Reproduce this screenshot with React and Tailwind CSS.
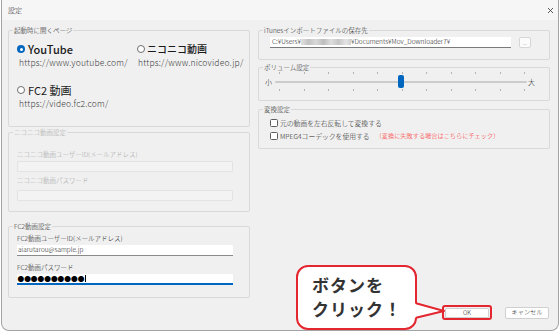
import React from "react";

function Group({ label, disabled, className, children }) {
    return (
        <div className={`border border-[#d9d9d9] rounded-[2px] ${className}`}>
            <div className={`-mt-[5px] ml-[4px] px-[1px] w-fit bg-[#f0f0f0] text-[6.5px] leading-[8px] ${disabled ? "text-[#a6a6a6]" : "text-[#222]"}`}>
                {label}
            </div>
            {children}
        </div>
    );
}

function Radio({ checked }) {
    return checked ? (
        <span className="w-[8px] h-[8px] rounded-full bg-[#0067c0] flex items-center justify-center shrink-0">
            <span className="w-[3px] h-[3px] rounded-full bg-white" />
        </span>
    ) : (
        <span className="w-[8px] h-[8px] rounded-full border border-[#6e6e6e] bg-white shrink-0" />
    );
}

function Checkbox() {
    return <span className="w-[8px] h-[8px] rounded-[1.5px] border border-[#5c5c5c] bg-white shrink-0" />;
}

export default function App() {
    const ticks = Array.from({ length: 11 });

    return (
        <div className="w-[560px] h-[332px] bg-white font-['Noto_Sans_CJK_JP',sans-serif] font-light text-[#1a1a1a]">
            <div className="relative ml-[1px] w-[558px] h-[331px] border-x border-b border-[#a3a3a3] rounded-b-[8px] bg-[#f0f0f0] flex flex-col overflow-hidden">
                {/* title bar */}
                <div className="h-[20px] shrink-0 bg-[#f6f6f6] flex items-center justify-between pl-[6px] pr-[4px]">
                    <span className="text-[7px] leading-[8px]">設定</span>
                    <svg width="7" height="7" viewBox="0 0 7 7">
                        <path d="M1 1L6 6M6 1L1 6" stroke="#333" strokeWidth="0.8" />
                    </svg>
                </div>

                <div className="flex-1 flex pl-[6px] pr-[8px] gap-[8px]">
                    {/* left column */}
                    <div className="w-[242px] flex flex-col pt-[10px]">
                        <Group label="起動時に開くページ" className="h-[97px]">
                            <div className="grid grid-cols-[120px_1fr] pl-[8px] mt-[8px]">
                                <div>
                                    <div className="flex items-center h-[14px]">
                                        <Radio checked />
                                        <span className="ml-[3px] text-[11px] leading-[14px] font-medium">YouTube</span>
                                    </div>
                                    <div className="ml-[2px] text-[8.5px] leading-[12px] tracking-[0.2px] text-[#3a3a3a]">https://www.youtube.com/</div>
                                </div>
                                <div>
                                    <div className="flex items-center h-[14px]">
                                        <Radio />
                                        <span className="ml-[2px] text-[10px] leading-[14px] font-medium">ニコニコ動画</span>
                                    </div>
                                    <div className="ml-[1px] text-[8.5px] leading-[12px] tracking-[0.2px] text-[#3a3a3a]">https://www.nicovideo.jp/</div>
                                </div>
                                <div className="mt-[15px]">
                                    <div className="flex items-center h-[14px]">
                                        <Radio />
                                        <span className="ml-[3px] text-[11px] leading-[14px] font-normal">FC2 動画</span>
                                    </div>
                                    <div className="ml-[2px] text-[8.5px] leading-[12px] tracking-[0.2px] text-[#3a3a3a]">https://video.fc2.com/</div>
                                </div>
                            </div>
                        </Group>

                        <Group label="ニコニコ動画設定" disabled className="h-[80px] mt-[5px]">
                            <div className="pl-[8px] pr-[8px] text-[#a6a6a6]">
                                <div className="mt-[14px] text-[6.5px] leading-[8px]">ニコニコ動画ユーザーID(メールアドレス)</div>
                                <div className="mt-[3px] w-[216px] h-[11px] border border-[#e3e3e3] bg-[#f3f3f3] rounded-[1px]" />
                                <div className="mt-[4px] text-[6.5px] leading-[8px]">ニコニコ動画パスワード</div>
                                <div className="mt-[6px] w-[216px] h-[11px] border border-[#e3e3e3] bg-[#f3f3f3] rounded-[1px]" />
                            </div>
                        </Group>

                        <Group label="FC2動画設定" className="h-[72px] mt-[14px]">
                            <div className="pl-[8px] pr-[8px]">
                                <div className="mt-[4px] text-[6.5px] leading-[8px]">FC2動画ユーザーID(メールアドレス)</div>
                                <div className="mt-[3px] w-[216px] h-[11px] bg-white border-b border-[#8a8a8a] rounded-t-[1px] flex items-center pl-[1px] text-[6.5px]">
                                    aiarutarou@sample.jp
                                </div>
                                <div className="mt-[7px] text-[6.5px] leading-[8px]">FC2動画パスワード</div>
                                <div className="mt-[3px] w-[216px] h-[11px] bg-white border-b-2 border-[#0067c0] rounded-t-[1px] flex items-center pl-[0.5px]">
                                    <span className="text-[6.7px] leading-[9px] text-black font-normal">●●●●●●●●●●</span>
                                    <span className="w-[0.6px] h-[7px] bg-black ml-[0.5px]" />
                                </div>
                            </div>
                        </Group>
                    </div>

                    {/* right column */}
                    <div className="w-[292px] flex flex-col pt-[10px] pb-[10px]">
                        <Group label="iTunesインポートファイルの保存先" className="h-[30px]">
                            <div className="flex items-center mt-[3px] pl-[11px]">
                                <div className="w-[241px] h-[11px] bg-white border-b border-[#7a7a7a] flex items-center pl-[2px] text-[6.5px] whitespace-nowrap overflow-hidden">
                                    <span>C:¥Users¥</span>
                                    <span className="inline-block w-[50px] h-[6px] bg-[linear-gradient(90deg,#e2e2e2,#c3c3c3_15%,#d9d9d9_30%,#bdbdbd_45%,#dedede_60%,#c6c6c6_75%,#e4e4e4_90%,#d0d0d0)]" />
                                    <span>¥Documents¥Mov_Downloader7¥</span>
                                </div>
                                <div className="ml-[8px] w-[12px] h-[11px] bg-[#fbfbfb] border border-[#d6d6d6] rounded-[2px] flex items-center justify-center text-[5px] leading-none text-[#555]">
                                    ...
                                </div>
                            </div>
                        </Group>

                        <Group label="ボリューム設定" className="h-[34px] mt-[7px]">
                            <div className="flex items-center mt-[1px] pl-[6px]">
                                <span className="text-[7px] leading-[8px] w-[10px]">小</span>
                                <div className="w-[252px] flex flex-col">
                                    <div className="flex justify-between pl-[4px] pr-[2px]">
                                        {ticks.map((_, i) => (
                                            <span key={i} className="w-[1px] h-[2px] bg-[#b4b4b4]" />
                                        ))}
                                    </div>
                                    <div className="relative mt-[7px] h-[2px] bg-[#cccccc] rounded-full">
                                        <span className="absolute left-[123px] -top-[6px] w-[6px] h-[13px] rounded-[2px] bg-[#0067c0]" />
                                    </div>
                                    <div className="flex justify-between pl-[4px] pr-[2px] mt-[6px]">
                                        {ticks.map((_, i) => (
                                            <span key={i} className="w-[1px] h-[2px] bg-[#b4b4b4]" />
                                        ))}
                                    </div>
                                </div>
                                <span className="ml-[1px] text-[7px] leading-[8px]">大</span>
                            </div>
                        </Group>

                        <Group label="変換設定" className="h-[40px] mt-[8px]">
                            <div className="pl-[11px] mt-[5px]">
                                <div className="flex items-center h-[10px] gap-[2px]">
                                    <Checkbox />
                                    <span className="text-[6.8px] leading-[10px]">元の動画を左右反転して変換する</span>
                                </div>
                                <div className="flex items-center h-[10px] gap-[2px] mt-[3px]">
                                    <Checkbox />
                                    <span className="text-[6.8px] leading-[10px]">MPEG4コーデックを使用する</span>
                                    <span className="ml-[4px] text-[6.2px] leading-[10px] text-[#ff2222]">（変換に失敗する場合はこちらにチェック）</span>
                                </div>
                            </div>
                        </Group>

                        <div className="mt-auto flex justify-end items-center pr-[1px]">
                            <div className="w-[50px] h-[15px] border-2 border-[#e3262f] rounded-[3px] flex items-center justify-center bg-[#f0f0f0]">
                                <div className="w-[44px] h-[10px] bg-white border border-[#d0d0d0] rounded-[1px] flex items-center justify-center text-[6px] leading-none">OK</div>
                            </div>
                            <div className="ml-[13px] w-[44px] h-[12px] bg-white border border-[#cfcfcf] rounded-[2px] flex items-center justify-center text-[6.2px] leading-none">
                                キャンセル
                            </div>
                        </div>
                    </div>
                </div>

                {/* callout */}
                <div className="absolute left-[294px] top-[265px] w-[121px] h-[65px] bg-white border-2 border-[#e3262f] rounded-[12px] pl-[14px] pt-[6px]">
                    <div className="text-[17px] leading-[24px] font-bold tracking-[1px] text-[#333]">ボタンを</div>
                    <div className="text-[17px] leading-[24px] font-bold tracking-[1px] text-[#333]">クリック！</div>
                </div>
                <svg className="absolute left-[411px] top-[300px]" width="32" height="22" viewBox="0 0 32 22">
                    <polygon points="0,3 31,11 0,18" fill="#fff" />
                    <polyline points="3,3.2 31,11 3,17.8" fill="none" stroke="#e3262f" strokeWidth="2" strokeLinejoin="round" />
                </svg>
            </div>
        </div>
    );
}
